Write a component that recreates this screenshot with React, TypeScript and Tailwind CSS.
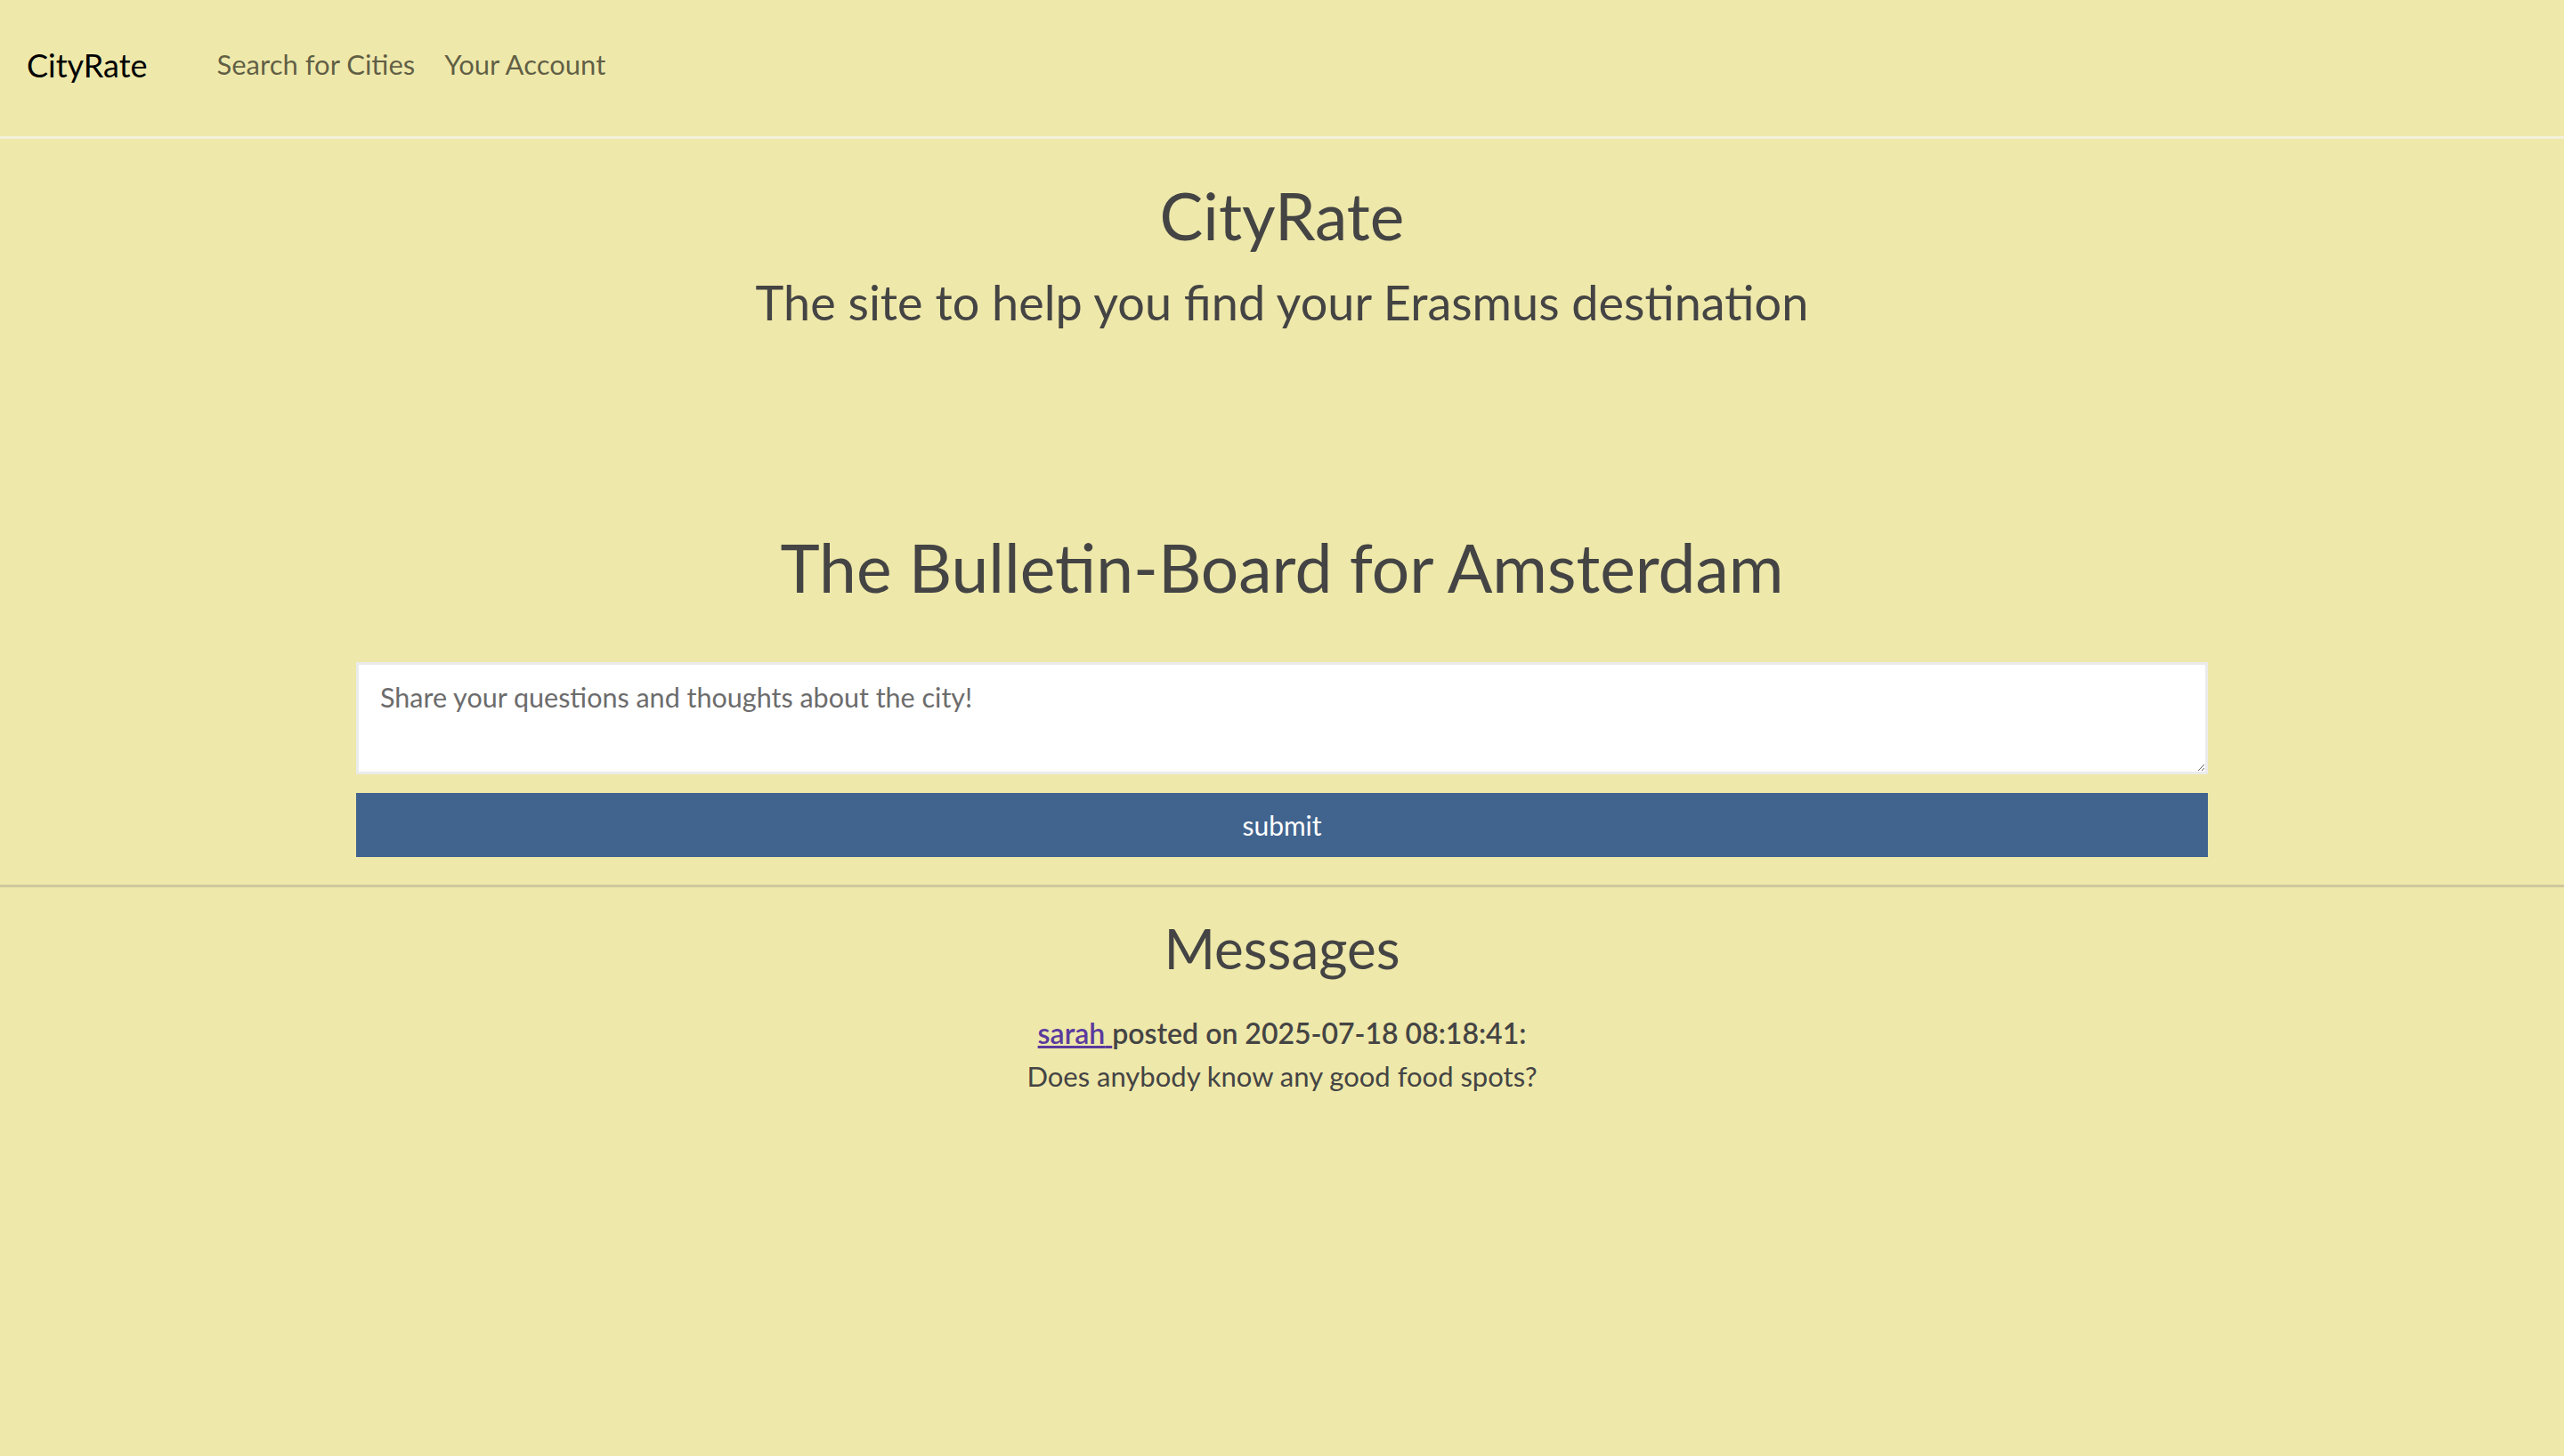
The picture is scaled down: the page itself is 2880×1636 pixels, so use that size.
import { useState } from "react";

const font = { fontFamily: "Lato, 'Open Sans', sans-serif" };

const messages = [
  { user: "sarah", date: "2025-07-18 08:18:41", text: "Does anybody know any good food spots?" },
];

const Navbar = () => (
  <nav className="h-[156px] flex items-center px-[30px] pb-[8px] border-b-[3px] border-[#f3f1dc]">
    <a href="#" className="text-[36px] text-black leading-none">CityRate</a>
    <div className="flex items-center gap-[33px] ml-[78px] text-[31px] text-black/60">
      <a href="#">Search for Cities</a>
      <a href="#">Your Account</a>
    </div>
  </nav>
);

export default function App() {
  const [post, setPost] = useState("");

  return (
    <div className="w-full min-h-screen bg-[#eee8aa] text-[#444]" style={font}>
      <Navbar />

      {/* Header */}
      <header className="flex flex-col items-center pt-[38px]">
        <h1 className="text-[73px] leading-[96px]">CityRate</h1>
        <h3 className="text-[54px] leading-[68px] mt-[16px]">The site to help you find your Erasmus destination</h3>
      </header>

      {/* Bulletin board */}
      <section className="flex flex-col items-center mt-[210px]">
        <h2 className="text-[75px] leading-[106px]">The Bulletin-Board for Amsterdam</h2>
        <form
          className="w-[2080px] mt-[54px] flex flex-col"
          onSubmit={(e) => {
            e.preventDefault();
            setPost("");
          }}
        >
          <textarea
            value={post}
            onChange={(e) => setPost(e.target.value)}
            placeholder="Share your questions and thoughts about the city!"
            className="h-[126px] bg-white border-[3px] border-[#ebebeb] px-[24px] py-[14px] text-[30.5px] leading-[44px] text-[#444] placeholder:text-[#6c6c6c] outline-none"
          />
          <button type="submit" className="h-[72px] mt-[21px] bg-[#41648f] text-white text-[30px]">
            submit
          </button>
        </form>
      </section>

      <hr className="mt-[31px] border-0 border-t-[3px] border-[#cdc89d]" />

      {/* Messages */}
      <section className="flex flex-col items-center pt-[29px]">
        <h2 className="text-[62px] leading-[78px]">Messages</h2>
        {messages.map((m, i) => (
          <div key={i} className="flex flex-col items-center mt-[33px] text-[32px] leading-[48px]">
            <p className="font-semibold">
              <a href="#" className="text-[#5b3a9e] underline">{m.user} </a>
              posted on {m.date}:
            </p>
            <p className="text-[31px]">{m.text}</p>
          </div>
        ))}
      </section>
    </div>
  );
}
